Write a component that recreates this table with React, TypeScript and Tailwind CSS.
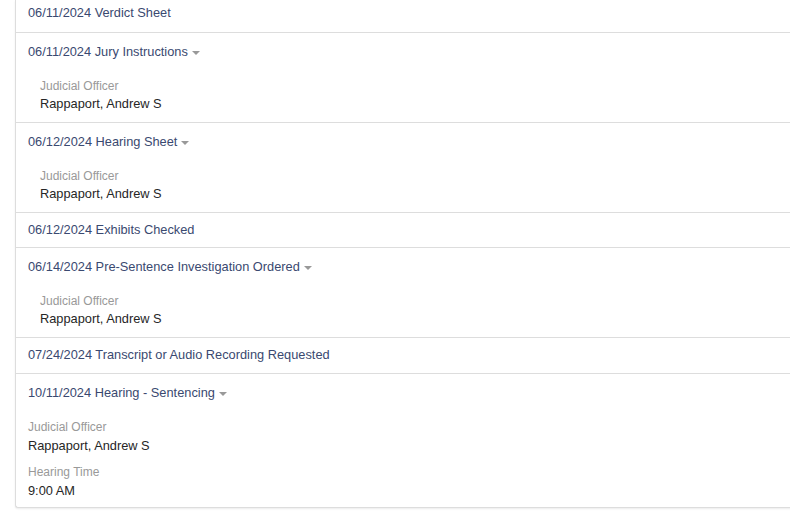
import React from "react";

type Detail = { label: string; value: string };
type Event = { title: string; details?: Detail[]; flush?: boolean };

const events: Event[] = [
  { title: "06/11/2024 Verdict Sheet" },
  { title: "06/11/2024 Jury Instructions", details: [{ label: "Judicial Officer", value: "Rappaport, Andrew S" }] },
  { title: "06/12/2024 Hearing Sheet", details: [{ label: "Judicial Officer", value: "Rappaport, Andrew S" }] },
  { title: "06/12/2024 Exhibits Checked" },
  { title: "06/14/2024 Pre-Sentence Investigation Ordered", details: [{ label: "Judicial Officer", value: "Rappaport, Andrew S" }] },
  { title: "07/24/2024 Transcript or Audio Recording Requested" },
  {
    title: "10/11/2024 Hearing - Sentencing",
    flush: true,
    details: [
      { label: "Judicial Officer", value: "Rappaport, Andrew S" },
      { label: "Hearing Time", value: "9:00 AM" },
    ],
  },
];

function Caret() {
  return (
    <span className="inline-block ml-[4px] align-middle w-0 h-0 border-t-4 border-x-4 border-x-transparent border-t-[#999]" />
  );
}

function EventRow({ ev, first, last, beforeLast }: { ev: Event; first: boolean; last: boolean; beforeLast: boolean }) {
  const hasDetails = !!ev.details;
  let pad = "pt-[9px] pb-[9px]";
  if (first) pad = "pt-[5px] pb-[11px]";
  else if (last) pad = "pt-[11px] pb-[8px]";
  else if (hasDetails) pad = "pt-[11px] pb-[10px]";
  else if (beforeLast) pad = "pt-[9px] pb-[10px]";

  return (
    <div className={`px-[12px] ${last ? "" : "border-b border-[#ddd]"} ${pad}`}>
      <div className="text-[12.8px] leading-[16px] text-[#3a4970]">
        {ev.title}
        {hasDetails && <Caret />}
      </div>
      {hasDetails && (
        <div className={`mt-[19px] ${ev.flush ? "" : "pl-[12px]"} flex flex-col gap-[11px]`}>
          {ev.details!.map((d) => (
            <div key={d.label} className={`flex flex-col ${ev.flush ? "gap-[3px]" : "gap-[2px]"}`}>
              <div className="text-[12px] leading-[15px] text-[#999]">{d.label}</div>
              <div className="text-[12.8px] leading-[16px] text-[#262626]">{d.value}</div>
            </div>
          ))}
        </div>
      )}
    </div>
  );
}

export default function App() {
  return (
    <div className="w-[790px] h-[521px] overflow-hidden bg-white font-['Liberation_Sans',Arial,sans-serif]">
      <div className="ml-[15px] w-[800px] bg-white border-l border-b border-[#ddd] rounded-bl-[3px] shadow-[0_1px_2px_rgba(0,0,0,0.08)]">
        {events.map((ev, i) => (
          <EventRow
            key={ev.title}
            ev={ev}
            first={i === 0}
            last={i === events.length - 1}
            beforeLast={i === events.length - 2}
          />
        ))}
      </div>
    </div>
  );
}
